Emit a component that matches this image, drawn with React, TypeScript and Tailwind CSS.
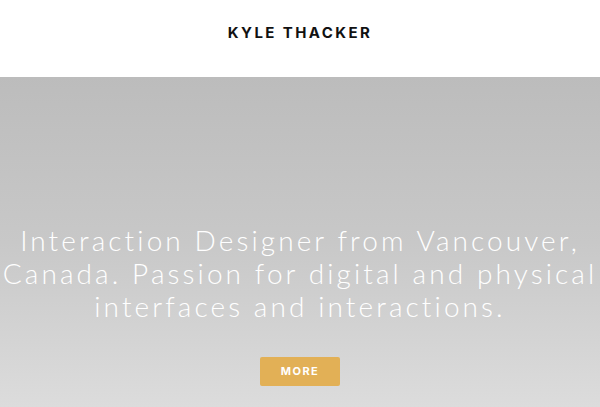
export default function App() {
  return (
    <div className="w-[600px] h-[407px] overflow-hidden bg-white flex flex-col">
      <header className="h-[77px] shrink-0 flex items-center justify-center pb-[11px]">
        <h1 className="font-['Inter',sans-serif] font-bold text-[15px] tracking-[2.4px] text-[#111]">
          KYLE THACKER
        </h1>
      </header>
      <section className="flex-1 bg-gradient-to-b from-[#bcbcbc] via-[#c8c8c8] to-[#dcdcdc] flex flex-col items-center pt-[147px]">
        <p className="font-['Lato',sans-serif] font-light text-[28px] leading-[33px] tracking-[3.1px] text-white text-center whitespace-nowrap">
          Interaction Designer from Vancouver,<br />
          Canada. Passion for digital and physical<br />
          interfaces and interactions.
        </p>
        <button className="mt-[34px] w-[80px] h-[29px] rounded-[2px] bg-[#e2b056] text-white font-['Inter',sans-serif] font-bold text-[11px] tracking-[1.5px] flex items-center justify-center">
          MORE
        </button>
      </section>
    </div>
  );
}
